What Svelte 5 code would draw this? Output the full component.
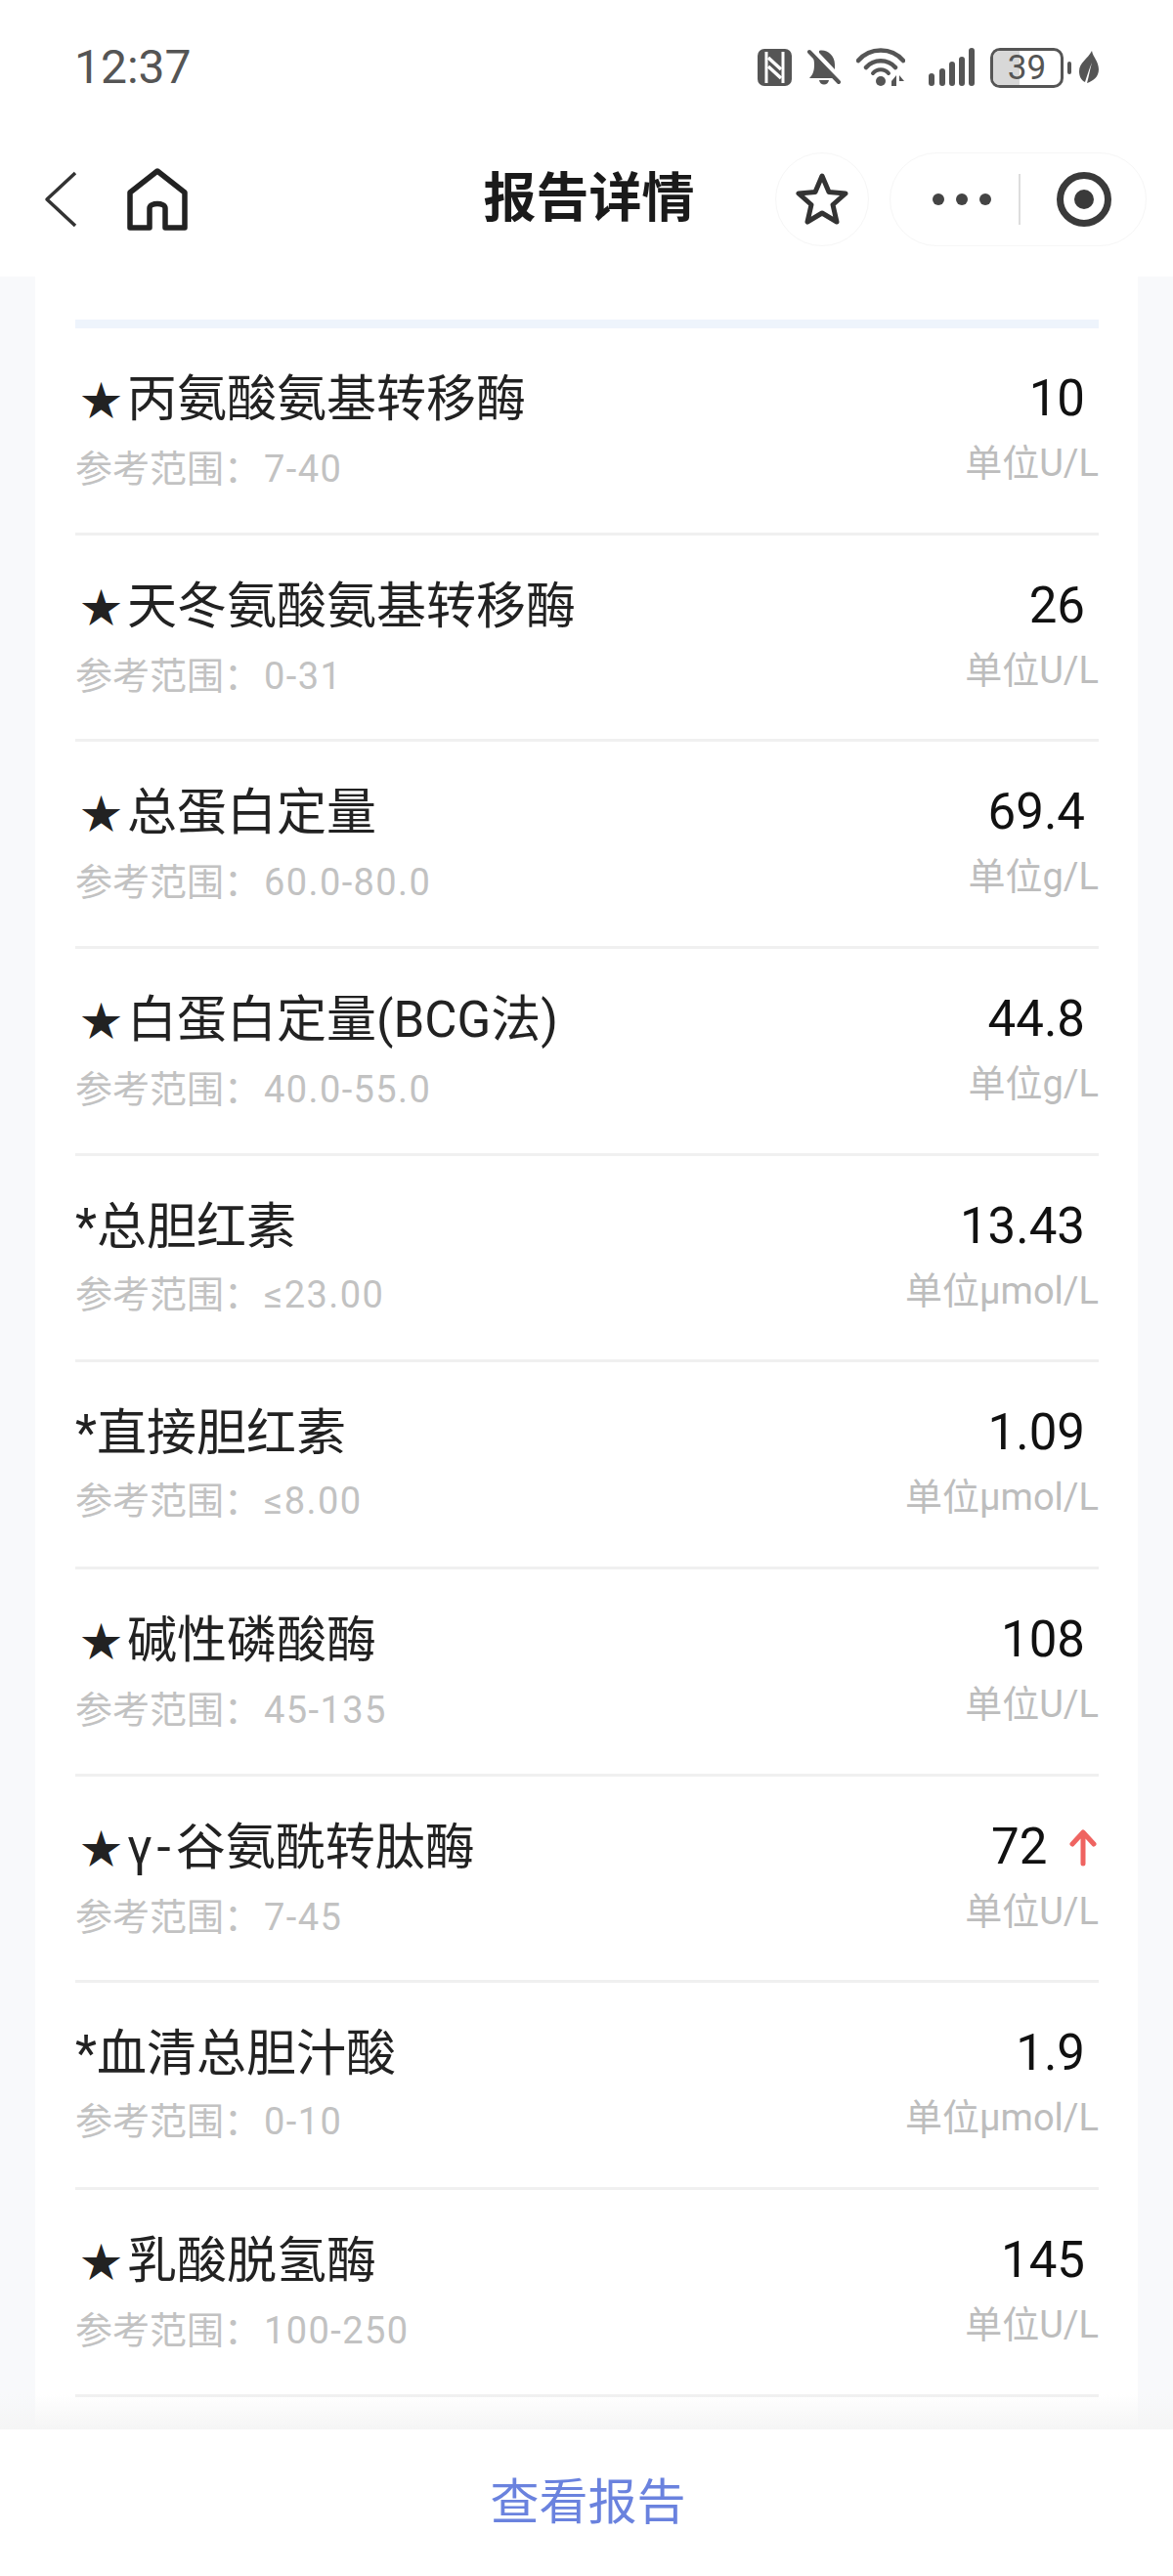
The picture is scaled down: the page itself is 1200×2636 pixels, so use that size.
<script>
  const rows = [
    { mark: "★", name: "丙氨酸氨基转移酶", range: "7-40", value: "10", unit: "U/L" },
    { mark: "★", name: "天冬氨酸氨基转移酶", range: "0-31", value: "26", unit: "U/L" },
    { mark: "★", name: "总蛋白定量", range: "60.0-80.0", value: "69.4", unit: "g/L" },
    { mark: "★", name: "白蛋白定量(BCG法)", range: "40.0-55.0", value: "44.8", unit: "g/L" },
    { mark: "*", name: "总胆红素", range: "≤23.00", value: "13.43", unit: "μmol/L" },
    { mark: "*", name: "直接胆红素", range: "≤8.00", value: "1.09", unit: "μmol/L" },
    { mark: "★", name: "碱性磷酸酶", range: "45-135", value: "108", unit: "U/L" },
    { mark: "★", pre: "γ-", name: "谷氨酰转肽酶", range: "7-45", value: "72", unit: "U/L", high: true },
    { mark: "*", name: "血清总胆汁酸", range: "0-10", value: "1.9", unit: "μmol/L" },
    { mark: "★", name: "乳酸脱氢酶", range: "100-250", value: "145", unit: "U/L" },
  ];
</script>

<div class="page">
  <div class="status">
    <span class="time">12:37</span>
    <div class="status-icons">
      <svg width="35" height="38" viewBox="0 0 35 38">
        <rect width="35" height="38" rx="7" fill="#555" />
        <path d="M9 3V35M26 3V35" stroke="#fff" stroke-width="3" />
        <path d="M11 9L24 21M11 18L24 30" stroke="#fff" stroke-width="3.5" fill="none" />
      </svg>
      <svg class="bell" width="35" height="40" viewBox="0 0 35 40">
        <path d="M6 8L27 31H2C6 27 7 23 7 17C7 13 6 11 6 8ZM12 3C19 1 28 7 28 17V22L12 5Z" fill="#555" />
        <path d="M2 4L32 35" stroke="#555" stroke-width="4" stroke-linecap="round" />
        <path d="M12 33H22C21 39 13 39 12 33Z" fill="#555" />
      </svg>
      <svg width="50" height="40" viewBox="0 0 50 40">
        <path d="M2 13C14 -1 36 -1 48 13M10 20C18 11 32 11 40 20" stroke="#555" stroke-width="4.5" stroke-linecap="round" fill="none" />
        <path d="M17 26C21 21 29 21 33 26" stroke="#555" stroke-width="4" stroke-linecap="round" fill="none" />
        <circle cx="25" cy="34" r="5" fill="#555" />
        <path d="M36 34L41 28V39H36ZM44 28L49 34H44V39Z" fill="#555" />
      </svg>
      <svg class="signal" width="48" height="40" viewBox="0 0 48 40">
        <g stroke="#555" stroke-width="6" stroke-linecap="round">
          <path d="M4 29V36M15 24V36M25 17V36M35 12V36M45 3V36" />
        </g>
      </svg>
      <div class="battery">
        <div class="level"></div>
        <span>39</span>
      </div>
      <div class="nub"></div>
      <svg class="leaf" width="20" height="34" viewBox="0 0 20 34">
        <path d="M13 0C14 6 20 11 20 19C20 27 14 31 8 33C10 26 11 19 13 12C10 19 8 26 6 32C2 30 0 26 0 21C0 12 9 8 13 0Z" fill="#555" />
      </svg>
    </div>
  </div>

  <header class="nav">
    <div class="nav-left">
      <svg width="34" height="58" viewBox="0 0 34 58">
        <path d="M32 2L3 29L32 56" stroke="#333" stroke-width="3.500" fill="none" stroke-linejoin="round" />
      </svg>
      <svg width="62" height="64" viewBox="0 0 62 64">
        <path d="M31 3L59 25V61H39V41C39 35 23 35 23 41V61H3V25Z" stroke="#222" stroke-width="5.500" fill="none" stroke-linejoin="round" />
      </svg>
    </div>
    <h1>报告详情</h1>
    <div class="nav-right">
      <button class="fav" aria-label="收藏">
        <svg width="54" height="54" viewBox="0 0 54 54">
          <path d="M27 3L34 19.500L51 21L38 32.500L42 50L27 41L12 50L16 32.500L3 21L20 19.500Z" stroke="#333" stroke-width="5" fill="none" stroke-linejoin="round" />
        </svg>
      </button>
      <div class="capsule">
        <div class="dots"><i></i><i></i><i></i></div>
        <div class="sep"></div>
        <div class="target"><i></i></div>
      </div>
    </div>
  </header>

  <main>
    <div class="card">
      <div class="bar"></div>
      {#each rows as row}
        <div class="row">
          <div class="left">
            <div class="name"><span class:star={row.mark === "★"}>{row.mark}</span>{#if row.pre}<span class="pre">{row.pre}</span>{/if}{row.name}</div>
            <div class="range">参考范围：<span class="num">{row.range}</span></div>
          </div>
          <div class="right">
            <div class="value" class:high={row.high}>
              {row.value}
              {#if row.high}
                <svg width="28" height="38" viewBox="0 0 28 38">
                  <path d="M14 35V3M3 15L14 3L25 15" stroke="#ef6461" stroke-width="5" stroke-linecap="round" stroke-linejoin="round" fill="none" />
                </svg>
              {/if}
            </div>
            <div class="unit">单位{row.unit}</div>
          </div>
        </div>
      {/each}
    </div>
    <div class="fade"></div>
  </main>

  <footer>查看报告</footer>
</div>

<style>
  :global(body) {
    margin: 0;
    background: #fff;
  }
  .page {
    display: flex;
    flex-direction: column;
    height: 2636px;
    overflow: hidden;
    font-family: Roboto, "Noto Sans CJK SC", sans-serif;
    background: #fff;
  }
  .status {
    display: flex;
    align-items: center;
    justify-content: space-between;
    height: 48px;
    padding: 45px 76px 0 76px;
  }
  .time {
    font-size: 48px;
    line-height: 48px;
    color: #555;
  }
  .status-icons {
    display: flex;
    align-items: center;
    gap: 16px;
  }
  .status-icons .signal {
    margin-left: 7px;
  }
  .status-icons .bell {
    margin-right: -1px;
  }
  .battery {
    position: relative;
    box-sizing: border-box;
    width: 75px;
    height: 41px;
    border: 3px solid #555;
    border-radius: 10px;
    overflow: hidden;
    text-align: center;
    margin-right: -12px;
  }
  .battery .level {
    position: absolute;
    left: 0;
    top: 0;
    bottom: 0;
    width: 39%;
    background: #d8d8d8;
  }
  .battery span {
    position: relative;
    display: block;
    font-size: 35px;
    line-height: 35px;
    color: #555;
  }
  .nub {
    width: 4px;
    height: 13px;
    border-radius: 2px;
    background: #555;
    margin-right: -8px;
  }
  .nav {
    display: grid;
    grid-template-columns: 1fr auto 1fr;
    align-items: center;
    height: 190px;
    padding: 32px 27px 0;
    box-sizing: border-box;
  }
  .nav-left {
    display: flex;
    align-items: center;
    gap: 51px;
    margin-left: 18px;
  }
  h1 {
    margin: 0;
    padding-left: 5px;
    font-size: 54px;
    line-height: 64px;
    font-weight: 700;
    color: #1a1a1a;
  }
  .nav-right {
    display: flex;
    align-items: center;
    justify-content: flex-end;
    gap: 21px;
  }
  .fav {
    display: flex;
    align-items: center;
    justify-content: center;
    box-sizing: border-box;
    width: 96px;
    height: 96px;
    padding: 0;
    border: 1px solid #f6f6f6;
    border-radius: 50%;
    background: #fff;
  }
  .capsule {
    display: flex;
    align-items: center;
    box-sizing: border-box;
    width: 263px;
    height: 96px;
    border: 1px solid #f6f6f6;
    border-radius: 48px;
  }
  .dots {
    display: flex;
    gap: 12px;
    margin-left: 43px;
  }
  .dots i {
    width: 12px;
    height: 12px;
    border-radius: 50%;
    background: #444;
  }
  .sep {
    width: 2px;
    height: 52px;
    margin-left: 28px;
    background: #ddd;
  }
  .target {
    display: flex;
    align-items: center;
    justify-content: center;
    box-sizing: border-box;
    width: 56px;
    height: 56px;
    margin-left: 37px;
    border: 7px solid #3a3a3a;
    border-radius: 50%;
  }
  .target i {
    width: 20px;
    height: 20px;
    border-radius: 50%;
    background: #3a3a3a;
  }
  main {
    position: relative;
    flex: 1;
    min-height: 0;
    overflow: hidden;
    padding: 0 36px;
    background: #f8f9fb;
  }
  .card {
    height: 100%;
    box-sizing: border-box;
    padding: 44px 40px 0 41px;
    background: #fff;
  }
  .bar {
    height: 9px;
    background: #eef4fc;
  }
  .row {
    display: flex;
    justify-content: space-between;
    box-sizing: border-box;
    height: 211.67px;
    padding-top: 37px;
    border-bottom: 3px solid #f0f0f0;
  }
  .name {
    font-size: 51px;
    line-height: 72px;
    color: #222;
  }
  .star {
    display: inline-block;
    width: 53px;
    font-size: 42px;
    text-align: center;
    vertical-align: 1px;
  }
  .pre {
    letter-spacing: 5px;
  }
  .range {
    margin-top: 6px;
    font-size: 38px;
    line-height: 54px;
    color: #c2c2c2;
  }
  .num {
    margin-left: 3px;
    letter-spacing: 1.4px;
  }
  .right {
    margin-top: -1px;
    text-align: right;
  }
  .value {
    padding-right: 14px;
    font-size: 51px;
    line-height: 72px;
    color: #111;
  }
  .value.high {
    padding-right: 2px;
  }
  .value svg {
    margin-left: 10px;
    vertical-align: -3px;
  }
  .unit {
    margin-top: 3px;
    font-size: 38px;
    line-height: 54px;
    color: #bdbdbd;
  }
  .fade {
    position: absolute;
    left: 0;
    right: 0;
    bottom: 0;
    height: 36px;
    background: linear-gradient(to bottom, rgba(245, 245, 245, 0), #f5f5f5);
  }
  footer {
    height: 150px;
    padding: 15px 0 0 3px;
    box-sizing: border-box;
    text-align: center;
    font-size: 50px;
    line-height: 120px;
    color: #6a82de;
    background: #fff;
  }
</style>
